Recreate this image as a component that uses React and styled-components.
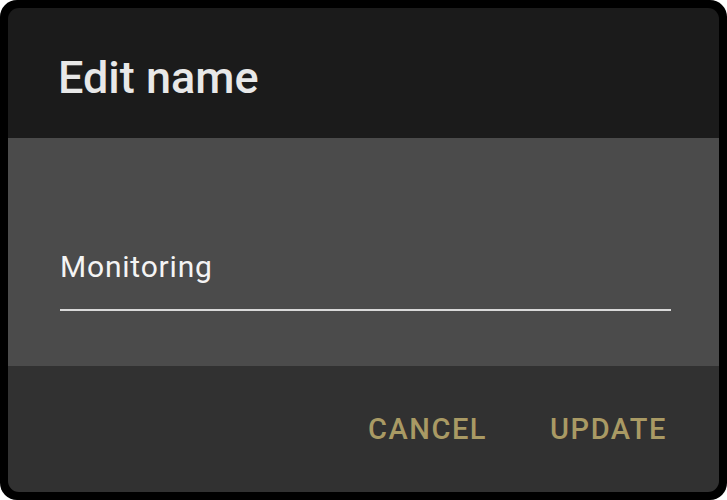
import React from "react";
import styled, { createGlobalStyle } from "styled-components";

const Global = createGlobalStyle`
  html, body { margin: 0; padding: 0; background: #ffffff; }
  body { font-family: Roboto, "Noto Sans", sans-serif; }
  #root { width: 727px; height: 500px; }
`;

const Frame = styled.div`
  box-sizing: border-box;
  width: 727px;
  height: 500px;
  background: #000;
  border-radius: 17px;
  padding: 8px;
  display: flex;
`;

const Dialog = styled.div`
  flex: 1;
  display: flex;
  flex-direction: column;
  border-radius: 11px;
  overflow: hidden;
`;

const Header = styled.div`
  height: 130px;
  background: #1b1b1b;
  display: flex;
  align-items: center;
  padding-left: 50px;
  padding-top: 9px;
  box-sizing: border-box;
`;

const Title = styled.h2`
  margin: 0;
  font-family: Roboto, sans-serif;
  font-weight: 500;
  font-size: 45px;
  color: #e8e8e8;
  letter-spacing: 0;
`;

const Content = styled.div`
  height: 228px;
  background: #4b4b4b;
  box-sizing: border-box;
  padding: 98px 48px 0 52px;
`;

const Field = styled.div`
  border-bottom: 2px solid #d9d9d9;
  height: 75px;
  box-sizing: border-box;
  display: flex;
  align-items: flex-start;
`;

const Input = styled.input`
  all: unset;
  width: 100%;
  font-family: Roboto, sans-serif;
  font-size: 30px;
  letter-spacing: 0.8px;
  line-height: 62px;
  color: #f4f4f4;
`;

const Footer = styled.div`
  flex: 1;
  background: #313131;
  display: flex;
  justify-content: flex-end;
  align-items: center;
  gap: 31px;
  padding-right: 36px;
`;

const TextButton = styled.button`
  all: unset;
  cursor: pointer;
  padding: 0 16px;
  font-family: Roboto, sans-serif;
  font-weight: 500;
  font-size: 29px;
  letter-spacing: 1.55px;
  color: #a99a64;
  text-transform: uppercase;
`;

export default function App() {
  return (
    <>
      <Global />
      <Frame>
        <Dialog>
          <Header>
            <Title>Edit name</Title>
          </Header>
          <Content>
            <Field>
              <Input defaultValue="Monitoring" />
            </Field>
          </Content>
          <Footer>
            <TextButton>Cancel</TextButton>
            <TextButton>Update</TextButton>
          </Footer>
        </Dialog>
      </Frame>
    </>
  );
}
